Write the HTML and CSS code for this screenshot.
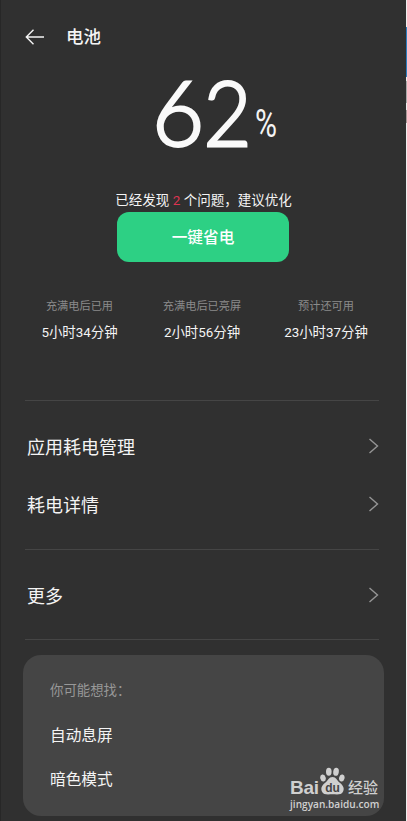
FILE: index.html
```html
<!DOCTYPE html>
<html lang="zh-CN">
<head>
<meta charset="utf-8">
<title>电池</title>
<link rel="stylesheet" href="styles.css">
</head>
<body>
<div class="page">
<main class="screen">
  <header class="bar">
    <svg class="back" width="20" height="18" viewBox="0 0 20 18"><path d="M19 9H1.5M8.5 1.8 1.3 9l7.2 7.2"/></svg>
    <h1>电池</h1>
  </header>
  <section class="level"><span class="num"><span>6</span><span class="narrow">2</span></span><span class="pct">%</span></section>
  <p class="notice">已经发现 <b>2</b> 个问题，建议优化</p>
  <button class="save">一键省电</button>
  <section class="stats">
    <div><small>充满电后已用</small><span>5小时34分钟</span></div>
    <div><small>充满电后已亮屏</small><span>2小时56分钟</span></div>
    <div><small>预计还可用</small><span>23小时37分钟</span></div>
  </section>
  <nav class="group two">
    <a>应用耗电管理<svg width="11" height="16" viewBox="0 0 11 16"><path d="M1.5 1 9.5 8l-8 7"/></svg></a>
    <a>耗电详情<svg width="11" height="16" viewBox="0 0 11 16"><path d="M1.5 1 9.5 8l-8 7"/></svg></a>
  </nav>
  <nav class="group one">
    <a>更多<svg width="11" height="16" viewBox="0 0 11 16"><path d="M1.5 1 9.5 8l-8 7"/></svg></a>
  </nav>
  <section class="suggest">
    <h2>你可能想找：</h2>
    <a>自动息屏</a>
    <a>暗色模式</a>
  </section>
  <div class="mark">
    <div class="brand"><span class="bai">Bai</span><svg width="25" height="28" viewBox="0 0 25 28"><ellipse cx="3" cy="11" rx="2.7" ry="3.5" transform="rotate(-15 3 11)"/><ellipse cx="8.8" cy="4.8" rx="2.8" ry="4"/><ellipse cx="16" cy="4.8" rx="2.8" ry="4" transform="rotate(8 16 5)"/><ellipse cx="21.8" cy="11" rx="2.7" ry="3.5" transform="rotate(15 21.8 11)"/><path d="M12.5 10c-3.7 0-4.5 3.5-7 5.5-3.7 2.8-5 5.5-3.7 8.7 1.7 4.2 6.5 3.1 10.7 3.1s9 1.1 10.7-3.1c1.3-3.2 0-5.9-3.7-8.7-2.5-2-3.3-5.500-7-5.500z"/><text x="5.2" y="25">du</text></svg><span class="exp">经验</span></div>
    <div class="url">jingyan.baidu.com</div>
  </div>
</main>
<aside class="edge"></aside>
</div>
</body>
</html>
```
FILE: styles.css
```css
* { box-sizing: border-box; }
body { margin: 0; font-family: Roboto, "Noto Sans CJK SC", sans-serif; color: #f4f4f4; }
.page { display: flex; width: 407px; height: 821px; overflow: hidden; }
.screen { position: relative; width: 406px; height: 821px; background: #303030; border-left: 1px solid #272727; flex: none; }
.edge { width: 1px; background: linear-gradient(#eee 27px, #2b7fc0 27px 77px, #eee 77px 81px, #aaa 81px 103px, #eee 103px 110px, #a99 110px 123px, #eee 123px); }
.bar { display: flex; align-items: center; height: 74px; padding-left: 24px; }
.back { fill: none; stroke: #f4f4f4; stroke-width: 1.4; }
h1 { margin: 0 0 0 21px; font-size: 17.5px; font-weight: 500; line-height: 24px; }
.level { display: flex; height: 114px; padding-left: 151px; }
.num { display: flex; font: 300 90px/74px Lato, sans-serif; color: #fafafa; -webkit-text-stroke: 2.8px #fafafa; }
.num span { width: 51px; }
.num .narrow { width: 50px; transform: scaleX(.92); transform-origin: 6px 0; }
.pct { width: 30px; font: 400 38px/40px Roboto, sans-serif; margin: 30px 0 0 2px; transform: scaleX(.79); transform-origin: 0 0; }
.notice { margin: 0; padding-top: 2px; height: 23px; line-height: 20px; font-size: 13.5px; text-align: center; white-space: pre; }
.notice b { color: #dc3450; font-weight: 400; }
.save { display: block; width: 172px; height: 50px; margin: 1px 0 0 116px; padding: 0; border: 0; border-radius: 12px; background: #2dd084; color: #fff; font: 500 15.7px/52px Roboto, "Noto Sans CJK SC", sans-serif; }
.stats { display: grid; grid-template-columns: 109px 136px 112px; margin: 35px 0 0 24px; height: 103px; text-align: center; }
.stats small { display: block; font-size: 11.2px; line-height: 20px; color: #8b8b8b; }
.stats span { display: block; margin-top: 6px; font-size: 13.4px; line-height: 20px; white-space: nowrap; }
.group { margin: 0 27px 0 24px; border-top: 1px solid #454545; font-size: 18px; }
.group a { display: flex; height: 58px; padding-left: 2px; align-items: center; justify-content: space-between; }
.group svg { fill: none; stroke: #959595; stroke-width: 1.4; }
.two { height: 149px; padding-top: 16px; }
.one { height: 91px; padding-top: 16px; border-bottom: 1px solid #454545; }
.one a { height: 57px; }
.suggest { width: 361px; height: 161px; margin: 15px 0 0 22px; padding: 25px 0 0 27px; border-radius: 18px; background: #454545; }
.suggest h2 { margin: 0 0 12px; font-size: 13.4px; font-weight: 400; line-height: 22px; color: #989898; }
.suggest a { display: block; font-size: 15.7px; line-height: 44px; }
.mark { position: absolute; left: 289px; top: 767px; color: #d0d0d0; }
.brand { display: flex; height: 28px; }
.brand svg { fill: #d0d0d0; margin-left: 1px; flex: none; }
.brand text { font: 700 12px "Liberation Sans", sans-serif; fill: #454545; }
.bai { width: 29px; font: 700 19px/42px "Liberation Sans", sans-serif; letter-spacing: -.3px; }
.exp { margin-left: 3px; font-size: 15px; font-weight: 500; line-height: 43px; }
.url { font: 600 10.1px/18px "Open Sans", sans-serif; }
```
